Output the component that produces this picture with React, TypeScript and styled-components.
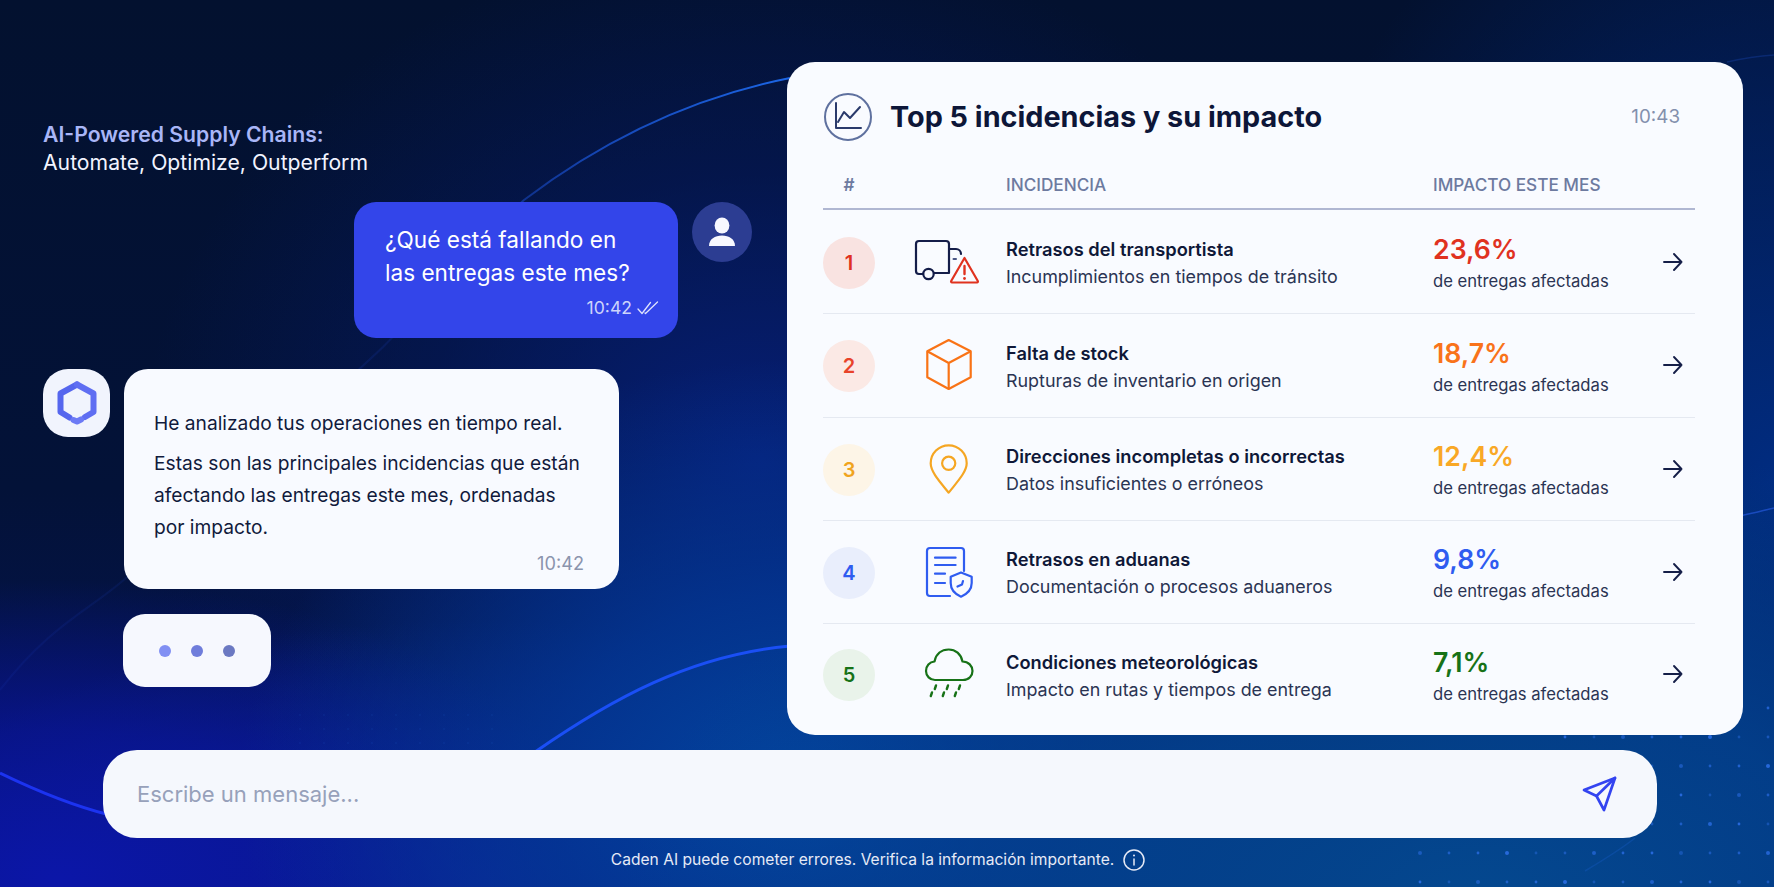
import React from "react";
import styled, { createGlobalStyle } from "styled-components";

const Global = createGlobalStyle`
  html, body { margin: 0; padding: 0; background: #03112f; }
  * { box-sizing: border-box; }
  body { font-family: Inter, "Noto Sans", "Liberation Sans", sans-serif; }
`;

const Stage = styled.div`
  position: relative;
  width: 1774px;
  height: 887px;
  overflow: hidden;
  display: flex;
  flex-direction: column;
  padding: 62px 31px 0 0;
  background:
    radial-gradient(ellipse 860px 460px at 1480px 900px, #04488f 0%, rgba(3, 66, 142, 0.85) 45%, rgba(2, 50, 130, 0) 100%),
    radial-gradient(ellipse 560px 430px at 800px 790px, #0345a0 0%, rgba(3, 56, 150, 0.8) 45%, rgba(4, 30, 120, 0) 100%),
    radial-gradient(ellipse 560px 300px at 60px 880px, #0b16a8 0%, rgba(10, 20, 160, 0.7) 50%, rgba(8, 20, 120, 0) 100%),
    radial-gradient(ellipse 620px 260px at 480px 880px, #0a2590 0%, rgba(8, 32, 130, 0.7) 55%, rgba(6, 28, 110, 0) 100%),
    radial-gradient(ellipse 520px 680px at 1774px 480px, #012c80 0%, rgba(1, 36, 110, 0.5) 60%, rgba(1, 30, 90, 0) 100%),
    radial-gradient(ellipse 620px 520px at 760px 460px, #061f78 0%, rgba(5, 26, 100, 0.5) 55%, rgba(4, 20, 70, 0) 100%),
    linear-gradient(180deg, #03112f 0%, #031238 55%, #04155a 100%);
`;

const Backdrop = styled.svg`
  position: absolute;
  inset: 0;
  z-index: 0;
`;

const Main = styled.div`
  position: relative;
  z-index: 1;
  display: flex;
  height: 673px;
`;

const Conversation = styled.section`
  width: 787px;
  flex: none;
  padding: 59px 35px 0 43px;
  display: flex;
  flex-direction: column;
`;

const Tagline = styled.div`
  font-size: 21.2px;
  line-height: 27.5px;
  color: #f2f4ff;
  margin-bottom: 26px;
  & strong { display: block; font-weight: 600; color: #a9b6f7; }
`;

const UserRow = styled.div`
  display: flex;
  justify-content: flex-end;
  align-items: flex-start;
  gap: 14px;
`;

const UserBubble = styled.div`
  width: 324px;
  height: 136px;
  padding: 21px 19px 0 31px;
  border-radius: 22px;
  background: #3345ea;
  color: #fff;
  font-size: 22.6px;
  line-height: 33px;
`;

const UserMeta = styled.div`
  display: flex;
  justify-content: flex-end;
  align-items: center;
  gap: 5px;
  margin-top: 7px;
  font-size: 17.6px;
  line-height: 24px;
  color: #cdd4fb;
`;

const UserAvatar = styled.div`
  width: 60px;
  height: 60px;
  border-radius: 50%;
  background: #2c3d92;
  display: flex;
  align-items: center;
  justify-content: center;
  flex: none;
`;

const BotRow = styled.div`
  display: flex;
  align-items: flex-start;
  gap: 14px;
  margin-top: 31px;
`;

const BotAvatar = styled.div`
  width: 67px;
  height: 68px;
  border-radius: 25px;
  background: #f1f4fd;
  display: flex;
  align-items: center;
  justify-content: center;
  flex: none;
`;

const BotBubble = styled.div`
  width: 495px;
  height: 220px;
  padding: 38px 30px 0 30px;
  border-radius: 24px;
  background: #f8faff;
  color: #111a3c;
  font-size: 19.2px;
  line-height: 32px;
  white-space: nowrap;
`;

const BotParagraph = styled.p`
  margin: 0 0 8px;
`;

const BotMeta = styled.div`
  text-align: right;
  font-size: 18.2px;
  line-height: 24px;
  margin: 4px 5px 0 0;
  color: #8b94ad;
`;

const Typing = styled.div`
  width: 148px;
  height: 73px;
  margin: 25px 0 0 80px;
  border-radius: 22px;
  background: #f6f8fe;
  display: flex;
  align-items: center;
  justify-content: center;
  gap: 20px;
`;

const Dot = styled.span<{ $c: string }>`
  width: 12px;
  height: 12px;
  border-radius: 50%;
  background: ${(p) => p.$c};
`;

const Panel = styled.section`
  width: 956px;
  flex: none;
  border-radius: 28px;
  background: #f9fbff;
  padding: 31px 48px 0 36px;
  color: #0d1638;
`;

const PanelHeader = styled.header`
  display: flex;
  align-items: center;
  height: 47px;
`;

const PanelTitle = styled.h1`
  margin: 0 0 0 17px;
  flex: 1;
  font-size: 28.8px;
  line-height: 40px;
  font-weight: 700;
  color: #0d1638;
`;

const PanelTime = styled.span`
  font-size: 18.8px;
  color: #8390ad;
  margin-right: 15px;
`;

const HeadRow = styled.div`
  display: flex;
  align-items: center;
  height: 70px;
  padding-top: 20px;
  border-bottom: 2px solid #b0b7d2;
  font-size: 17.2px;
  font-weight: 500;
  color: #6d7a9f;
`;

const HeadHash = styled.span`
  width: 52px;
  text-align: center;
  font-weight: 600;
`;

const HeadIssue = styled.span`
  margin-left: 131px;
  width: 427px;
`;

const Row = styled.div<{ $h: number; $last?: boolean }>`
  display: flex;
  align-items: center;
  height: ${(p) => p.$h}px;
  border-bottom: ${(p) => (p.$last ? "none" : "1.5px solid #e5e9f1")};
`;

const Badge = styled.span<{ $bg: string; $fg: string }>`
  width: 52px;
  height: 52px;
  flex: none;
  margin-top: 2px;
  border-radius: 50%;
  background: ${(p) => p.$bg};
  color: ${(p) => p.$fg};
  display: flex;
  align-items: center;
  justify-content: center;
  font-size: 20px;
  font-weight: 600;
`;

const IconSlot = styled.span`
  width: 70px;
  height: 60px;
  flex: none;
  margin: 0 22px 0 39px;
  & svg { display: block; }
`;

const IssueText = styled.div`
  width: 427px;
  flex: none;
  padding-top: 2px;
`;

const IssueTitle = styled.div`
  font-size: 18.3px;
  line-height: 28px;
  font-weight: 600;
  color: #0f1838;
`;

const IssueSub = styled.div`
  font-size: 17.9px;
  line-height: 27px;
  color: #2b3453;
`;

const Impact = styled.div<{ $c: string }>`
  width: 230px;
  flex: none;
  padding-top: 7px;
  & b {
    display: block;
    font-size: 26.7px;
    line-height: 32px;
    font-weight: 600;
    color: ${(p) => p.$c};
  }
  & span {
    display: block;
    font-size: 16.65px;
    line-height: 32px;
    color: #2b3453;
  }
`;

const ArrowSlot = styled.span`
  width: 20px;
  height: 20px;
  flex: none;
`;

const Composer = styled.div`
  position: relative;
  z-index: 1;
  margin: 15px 0 0 103px;
  width: 1554px;
  height: 88px;
  flex: none;
  border-radius: 34px;
  background: #f5f8fd;
  display: flex;
  align-items: center;
  justify-content: space-between;
  padding: 0 39px 0 34px;
`;

const Placeholder = styled.span`
  font-size: 22px;
  color: #97a1ba;
`;

const Disclaimer = styled.footer`
  position: relative;
  z-index: 1;
  display: flex;
  align-items: center;
  justify-content: center;
  gap: 9px;
  margin: 11px 0 0 0;
  width: 1756px;
  font-size: 15.6px;
  line-height: 22px;
  color: #e6eaf6;
`;

const dotsFor = () => {
  const out: { x: number; y: number; r: number; o: number }[] = [];
  let k = 0;
  for (let y = 708; y < 887; y += 29) {
    for (let x = 1420; x < 1774; x += 29) {
      k++;
      if (x - 1420 + (y - 700) * 1.2 < 170) continue;
      out.push({ x, y, r: k % 3 === 0 ? 2 : 1.4, o: 0.4 + (k % 5) * 0.1 });
    }
  }
  for (let y = 715; y < 750; y += 14) {
    for (let x = 300; x < 500; x += 24) {
      k++;
      out.push({ x, y, r: 0.8, o: 0.18 });
    }
  }
  return out;
};

const Background = () => (
  <Backdrop width="1774" height="887" viewBox="0 0 1774 887" fill="none">
    <defs>
      <linearGradient id="arc" x1="0" y1="690" x2="790" y2="78" gradientUnits="userSpaceOnUse">
        <stop offset="0" stopColor="#1d47d8" stopOpacity="0.1" />
        <stop offset="0.6" stopColor="#1c49d8" stopOpacity="0.15" />
        <stop offset="0.8" stopColor="#1c5ae0" stopOpacity="0.7" />
        <stop offset="1" stopColor="#1c66e6" stopOpacity="1" />
      </linearGradient>
    </defs>
    <path d="M0 690 C50 625 90 610 126 578 C210 505 300 425 383 347 C430 300 480 240 524 200 C590 150 680 100 790 78" stroke="url(#arc)" strokeWidth="2" />
    <path d="M0 773 C35 790 70 805 110 815" stroke="#1c33f0" strokeWidth="3" />
    <path d="M535 752 C610 700 690 655 790 646" stroke="#1a4ff5" strokeWidth="3" />
    <path d="M1740 516 C1755 513 1765 510 1774 508" stroke="#2457d8" strokeWidth="1.5" strokeOpacity="0.7" />
    <path d="M1727 62 C1745 58 1760 56 1774 55" stroke="#1742a8" strokeWidth="1.5" strokeOpacity="0.4" />
    <path d="M1635 838 C1620 850 1600 862 1585 871" stroke="#1c5fd0" strokeWidth="1.5" strokeOpacity="0.3" />
    {dotsFor().map((d, i) => (
      <circle key={i} cx={d.x} cy={d.y} r={d.r} fill="#2f72ee" fillOpacity={d.o} />
    ))}
  </Backdrop>
);

const TruckIcon = () => (
  <svg width="70" height="60" viewBox="24 12 70 60" fill="none" strokeLinecap="round" strokeLinejoin="round">
    <path d="M33 54 H29 a3 3 0 0 1-3-3 V24 a3 3 0 0 1 3-3 H56 a3 3 0 0 1 3 3 V53 H44" stroke="#141d49" strokeWidth="2.2" />
    <path d="M60 29 H66 a5 5 0 0 1 5 5" stroke="#141d49" strokeWidth="2.2" />
    <path d="M63.5 39 H66" stroke="#4a5685" strokeWidth="2" />
    <circle cx="38.5" cy="54" r="5.2" stroke="#141d49" strokeWidth="2.2" />
    <path d="M74.5 38 L87.8 61 a1 1 0 0 1-.8 1.5 H62 a1 1 0 0 1-.8-1.5 Z" stroke="#e0321f" strokeWidth="2.2" />
    <path d="M74.5 46 V54" stroke="#e0321f" strokeWidth="2.4" />
    <path d="M74.5 58.4 V58.6" stroke="#e0321f" strokeWidth="2.8" />
  </svg>
);

const BoxIcon = () => (
  <svg width="70" height="60" viewBox="24 116 70 60" fill="none" stroke="#f97316" strokeWidth="2.2" strokeLinejoin="round">
    <path d="M58.7 121 L80.7 132.3 V158.3 L58.7 170 L37.3 158.3 V132.3 Z" />
    <path d="M37.3 132.3 L58.7 144 L80.7 132.3 M58.7 144 V170" />
  </svg>
);

const PinIcon = () => (
  <svg width="70" height="60" viewBox="24 9 70 60" fill="none" stroke="#f5a623" strokeWidth="2.2" strokeLinejoin="round">
    <path d="M58.7 62.7 C50 52 40.7 42 40.7 33.3 A18 18 0 0 1 76.7 33.3 C76.7 42 67 52 58.7 62.7 Z" />
    <circle cx="58.7" cy="33.3" r="6.6" />
  </svg>
);

const DocIcon = () => (
  <svg width="70" height="60" viewBox="24 112 70 60" fill="none" stroke="#2f5cf0" strokeWidth="2.2" strokeLinecap="round" strokeLinejoin="round">
    <path d="M74 141 V121 a3 3 0 0 0-3-3 H40 a3 3 0 0 0-3 3 V163 a3 3 0 0 0 3 3 H60" />
    <path d="M45 127.7 H65.6 M45 135 H65.6 M45 143.7 H55 M45 153 H55" />
    <path d="M71 142.5 L81.7 146.7 V153 C81.7 160 76 164.5 71 166.7 C66 164.5 60.7 160 60.7 153 V146.7 Z" />
    <path d="M67.5 156.5 L72 154.5 L73 151" />
  </svg>
);

const RainIcon = () => (
  <svg width="70" height="60" viewBox="24 214 70 60" fill="none" stroke="#177217" strokeLinecap="round" strokeLinejoin="round">
    <path strokeWidth="2.2" d="M45 250 H73 C79 250 82.5 245.5 82.5 241 C82.5 236 78.5 231.5 72.5 231.5 C71 224 65.5 219.5 58.7 219.5 C51.5 219.5 46 224 44.5 231.5 C39.5 232 36 236 36 241 C36 246 40 250 45 250 Z" />
    <path strokeWidth="2.4" d="M46 255.5 L44.8 259 M42 262.5 L40.8 266 M58 255.5 L56.8 259 M54 262.5 L52.8 266 M70 255.5 L68.8 259 M66 262.5 L64.8 266" />
  </svg>
);

const rows = [
  { n: "1", h: 104, bg: "#f9e3e1", fg: "#e0321f", icon: <TruckIcon />, t: "Retrasos del transportista", s: "Incumplimientos en tiempos de tránsito", v: "23,6%", c: "#e0321f" },
  { n: "2", h: 103.5, bg: "#fbe9e5", fg: "#e8432a", icon: <BoxIcon />, t: "Falta de stock", s: "Rupturas de inventario en origen", v: "18,7%", c: "#f9731a" },
  { n: "3", h: 103, bg: "#fdf5e7", fg: "#f0a41e", icon: <PinIcon />, t: "Direcciones incompletas o incorrectas", s: "Datos insuficientes o erróneos", v: "12,4%", c: "#f9a826" },
  { n: "4", h: 103, bg: "#e9eefc", fg: "#2f5cf0", icon: <DocIcon />, t: "Retrasos en aduanas", s: "Documentación o procesos aduaneros", v: "9,8%", c: "#2f5cf0" },
  { n: "5", h: 101, bg: "#e9f3ea", fg: "#177217", icon: <RainIcon />, t: "Condiciones meteorológicas", s: "Impacto en rutas y tiempos de entrega", v: "7,1%", c: "#177217" },
];

export default function App() {
  return (
    <Stage>
      <Global />
      <Background />
      <Main>
        <Conversation>
          <Tagline>
            <strong>AI-Powered Supply Chains:</strong>
            Automate, Optimize, Outperform
          </Tagline>
          <UserRow>
            <UserBubble>
              ¿Qué está fallando en
              <br />
              las entregas este mes?
              <UserMeta>
                10:42
                <svg width="22" height="14" viewBox="0 0 22 14" fill="none" stroke="#dfe3fd" strokeWidth="1.3" strokeLinecap="round" strokeLinejoin="round">
                  <path d="M1 8 L5 12.5 L13.5 1.5" />
                  <path d="M8 12 L8.5 12.5 L20.5 1" />
                </svg>
              </UserMeta>
            </UserBubble>
            <UserAvatar>
              <svg width="30" height="32" viewBox="0 0 30 32" fill="#f7f8ff">
                <ellipse cx="15" cy="9.5" rx="7.4" ry="8" />
                <path d="M2 30 C2 23 8 19.5 15 19.5 C22 19.5 28 23 28 30 Z" />
              </svg>
            </UserAvatar>
          </UserRow>
          <BotRow>
            <BotAvatar>
              <svg width="40" height="44" viewBox="0 0 40 44" fill="none" strokeWidth="6" strokeLinecap="round" strokeLinejoin="round">
                <path d="M12.5 36.5 L3.5 31 V12.5 L20 3.5" stroke="#5566ee" />
                <path d="M20 3.5 L36.5 12.5 V31 L28 36" stroke="#5f6ef2" />
                <path d="M16.5 39 L20 40.5 L24 38.5" stroke="#6c7af5" />
              </svg>
            </BotAvatar>
            <BotBubble>
              <BotParagraph>He analizado tus operaciones en tiempo real.</BotParagraph>
              <BotParagraph>
                Estas son las principales incidencias que están
                <br />
                afectando las entregas este mes, ordenadas
                <br />
                por impacto.
              </BotParagraph>
              <BotMeta>10:42</BotMeta>
            </BotBubble>
          </BotRow>
          <Typing>
            <Dot $c="#8190f3" />
            <Dot $c="#6f7ddb" />
            <Dot $c="#6b79c2" />
          </Typing>
        </Conversation>
        <Panel>
          <PanelHeader>
            <svg width="50" height="50" viewBox="0 0 50 50" fill="none" strokeLinecap="round" strokeLinejoin="round">
              <circle cx="25" cy="25" r="23" stroke="#5f719f" strokeWidth="2" />
              <path d="M13 11 V36 H38" stroke="#2a3a6b" strokeWidth="2" />
              <path d="M15 30 L21 20 L27 26 L37 15" stroke="#2a3a6b" strokeWidth="2" />
            </svg>
            <PanelTitle>Top 5 incidencias y su impacto</PanelTitle>
            <PanelTime>10:43</PanelTime>
          </PanelHeader>
          <HeadRow>
            <HeadHash>#</HeadHash>
            <HeadIssue>INCIDENCIA</HeadIssue>
            <span>IMPACTO ESTE MES</span>
          </HeadRow>
          {rows.map((r, i) => (
            <Row key={r.n} $h={r.h} $last={i === rows.length - 1}>
              <Badge $bg={r.bg} $fg={r.fg}>{r.n}</Badge>
              <IconSlot>{r.icon}</IconSlot>
              <IssueText>
                <IssueTitle>{r.t}</IssueTitle>
                <IssueSub>{r.s}</IssueSub>
              </IssueText>
              <Impact $c={r.c}>
                <b>{r.v}</b>
                <span>de entregas afectadas</span>
              </Impact>
              <ArrowSlot>
                <svg width="20" height="20" viewBox="0 0 20 20" fill="none" stroke="#151e48" strokeWidth="1.9" strokeLinecap="round" strokeLinejoin="round">
                  <path d="M1 10 H18.5 M11 2 L18.5 10 L11 18" />
                </svg>
              </ArrowSlot>
            </Row>
          ))}
        </Panel>
      </Main>
      <Composer>
        <Placeholder>Escribe un mensaje...</Placeholder>
        <svg width="36" height="36" viewBox="0 0 36 36" fill="none" stroke="#3344f0" strokeWidth="2.7" strokeLinecap="round" strokeLinejoin="round">
          <path d="M2 14 L33 2 L22 34 L14.5 20 Z" />
          <path d="M14.5 20 L33 2" />
        </svg>
      </Composer>
      <Disclaimer>
        Caden AI puede cometer errores. Verifica la información importante.
        <svg width="22" height="22" viewBox="0 0 22 22" fill="none" stroke="#e6eaf6" strokeWidth="1.5" strokeLinecap="round">
          <circle cx="11" cy="11" r="10" />
          <path d="M11 10 V16" />
          <path d="M11 6.4 V6.6" strokeWidth="2" />
        </svg>
      </Disclaimer>
    </Stage>
  );
}
